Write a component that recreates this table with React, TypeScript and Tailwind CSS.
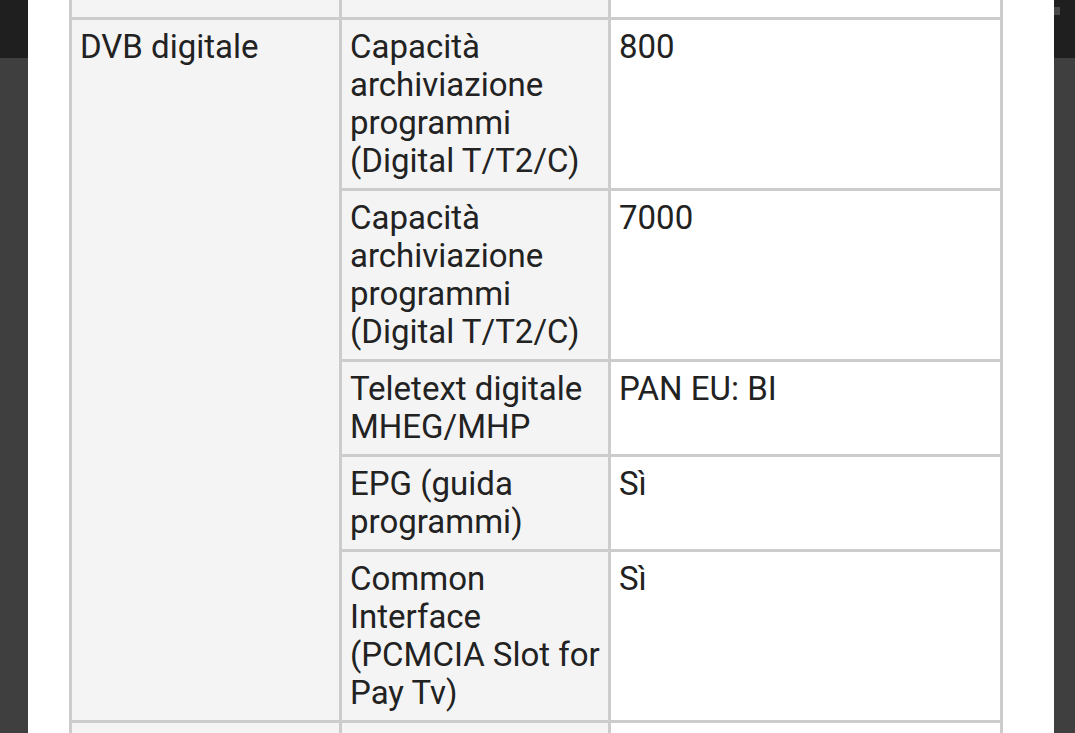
const rows = [
  { label: "Capacità archiviazione programmi (Digital T/T2/C)", value: "800" },
  { label: "Capacità archiviazione programmi (Digital T/T2/C)", value: "7000" },
  { label: "Teletext digitale MHEG/MHP", value: "PAN EU: BI" },
  { label: "EPG (guida programmi)", value: "Sì" },
  { label: "Common Interface (PCMCIA Slot for Pay Tv)", value: "Sì" },
];

export default function App() {
  return (
    <div className="relative h-screen w-full overflow-hidden bg-[#3f3f3f] font-['Roboto',sans-serif]">
      {/* page header behind the overlay */}
      <div className="flex h-[58px] items-start justify-end bg-[#1f1f1f] pr-[15px] pt-[7px]">
        <div className="h-[8px] w-[6px] bg-[#484848]" />
      </div>

      {/* modal */}
      <div className="absolute bottom-0 left-[28px] right-[21px] top-0 overflow-hidden bg-white">
        <div className="ml-[41px] -mt-[3px] grid w-[934px] grid-cols-[267px_266px_389px] gap-[3px] bg-[#cccccc] p-[3px] text-[33px] leading-[38px] text-[#222222]">
          {/* tail of the previous row */}
          <div className="h-[17px] bg-[#f4f4f4]" />
          <div className="h-[17px] bg-[#f4f4f4]" />
          <div className="h-[17px] bg-white" />

          <div className="row-span-5 bg-[#f4f4f4] px-2 py-2">DVB digitale</div>
          {rows.map((r, i) => (
            <div key={i} className="contents">
              <div className="bg-[#f4f4f4] px-2 py-2">{r.label}</div>
              <div className="bg-white px-2 py-2">{r.value}</div>
            </div>
          ))}

          {/* start of the next row */}
          <div className="h-[60px] bg-[#f4f4f4]" />
          <div className="h-[60px] bg-[#f4f4f4]" />
          <div className="h-[60px] bg-white" />
        </div>
      </div>
    </div>
  );
}
